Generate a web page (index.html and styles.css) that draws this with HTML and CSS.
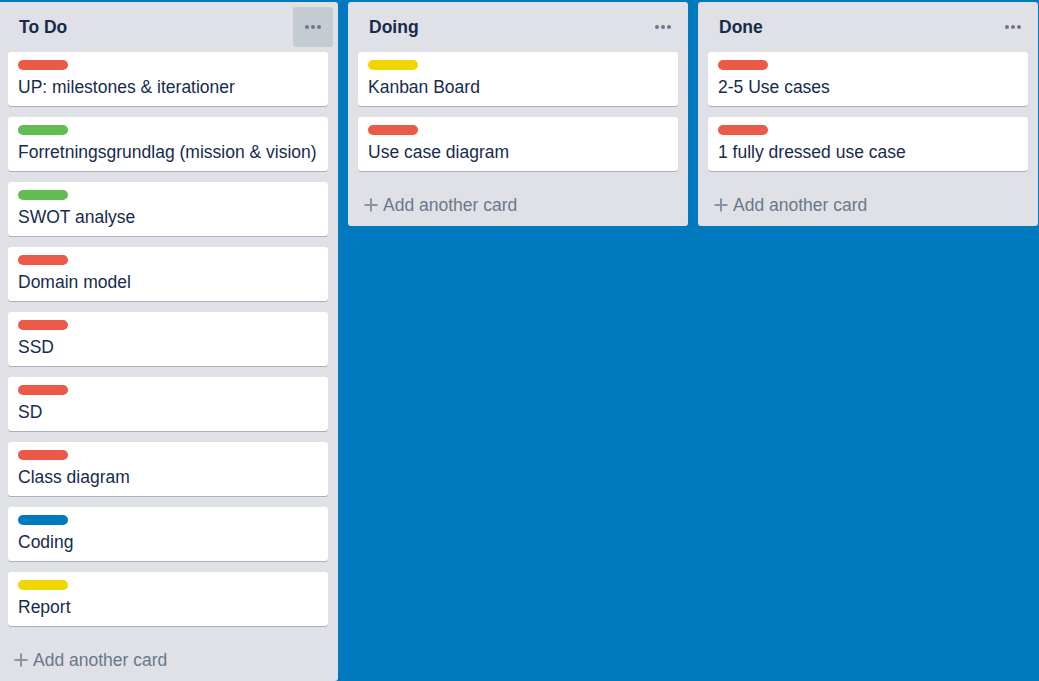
FILE: index.html
```html
<!DOCTYPE html>
<html>
<head>
<meta charset="utf-8">
<link rel="stylesheet" href="styles.css">
</head>
<body>
<div class="board">
  <div class="list">
    <div class="list-header">
      <h2 class="list-title">To Do</h2>
      <button class="menu-btn active" aria-label="List actions"><span></span><span></span><span></span></button>
    </div>
    <div class="cards">
      <div class="card"><div class="label red"></div><div class="card-title">UP: milestones &amp; iterationer</div></div>
      <div class="card"><div class="label green"></div><div class="card-title">Forretningsgrundlag (mission &amp; vision)</div></div>
      <div class="card"><div class="label green"></div><div class="card-title">SWOT analyse</div></div>
      <div class="card"><div class="label red"></div><div class="card-title">Domain model</div></div>
      <div class="card"><div class="label red"></div><div class="card-title">SSD</div></div>
      <div class="card"><div class="label red"></div><div class="card-title">SD</div></div>
      <div class="card"><div class="label red"></div><div class="card-title">Class diagram</div></div>
      <div class="card"><div class="label blue"></div><div class="card-title">Coding</div></div>
      <div class="card"><div class="label yellow"></div><div class="card-title">Report</div></div>
    </div>
    <div class="add-card"><svg class="plus" viewBox="0 0 14 14" width="14" height="14"><path d="M7 0.5v13M0.5 7h13" stroke="currentColor" stroke-width="2"/></svg><span>Add another card</span></div>
  </div>

  <div class="list">
    <div class="list-header">
      <h2 class="list-title">Doing</h2>
      <button class="menu-btn" aria-label="List actions"><span></span><span></span><span></span></button>
    </div>
    <div class="cards">
      <div class="card"><div class="label yellow"></div><div class="card-title">Kanban Board</div></div>
      <div class="card"><div class="label red"></div><div class="card-title">Use case diagram</div></div>
    </div>
    <div class="add-card"><svg class="plus" viewBox="0 0 14 14" width="14" height="14"><path d="M7 0.5v13M0.5 7h13" stroke="currentColor" stroke-width="2"/></svg><span>Add another card</span></div>
  </div>

  <div class="list">
    <div class="list-header">
      <h2 class="list-title">Done</h2>
      <button class="menu-btn" aria-label="List actions"><span></span><span></span><span></span></button>
    </div>
    <div class="cards">
      <div class="card"><div class="label red"></div><div class="card-title">2-5 Use cases</div></div>
      <div class="card"><div class="label red"></div><div class="card-title">1 fully dressed use case</div></div>
    </div>
    <div class="add-card"><svg class="plus" viewBox="0 0 14 14" width="14" height="14"><path d="M7 0.5v13M0.5 7h13" stroke="currentColor" stroke-width="2"/></svg><span>Add another card</span></div>
  </div>
</div>
</body>
</html>
```
FILE: styles.css
```css
html, body {
  margin: 0;
  padding: 0;
}
body {
  background: #0079bf;
  font-family: "Liberation Sans", Arial, sans-serif;
  color: #172b4d;
  overflow: hidden;
  height: 681px;
}
.board {
  display: flex;
  align-items: flex-start;
  gap: 10px;
  padding-top: 2px;
  margin-left: -2px;
}
.list {
  flex: 0 0 340px;
  width: 340px;
  background: #dfe1e6;
  border-radius: 3px;
}
.list-header {
  display: flex;
  align-items: flex-start;
  height: 50px;
  box-sizing: border-box;
  padding: 5px 5px 0 21px;
}
.list-title {
  margin: 0;
  font-size: 17.5px;
  font-weight: bold;
  line-height: 41px;
  color: #172b4d;
}
.menu-btn {
  margin-left: auto;
  width: 40px;
  height: 40px;
  border: 0;
  border-radius: 3px;
  background: transparent;
  display: flex;
  align-items: center;
  justify-content: center;
  gap: 2px;
  padding: 0;
}
.menu-btn.active {
  background: #c4cbd1;
}
.menu-btn span {
  width: 4px;
  height: 4px;
  border-radius: 50%;
  background: #6b778c;
}
.cards {
  padding: 0 10px;
}
.card {
  height: 54px;
  box-sizing: border-box;
  background: #fff;
  border-radius: 3px;
  box-shadow: 0 1px 0 rgba(9, 30, 66, 0.25);
  margin-bottom: 11px;
  padding: 8px 10px 0;
}
.label {
  width: 50px;
  height: 10px;
  border-radius: 5px;
  margin-bottom: 7px;
}
.label.red { background: #eb5a46; }
.label.green { background: #61bd4f; }
.label.blue { background: #0079bf; }
.label.yellow { background: #f2d600; }
.card-title {
  font-size: 17.5px;
  line-height: 20px;
  color: #172b4d;
  white-space: nowrap;
}
.add-card {
  height: 44px;
  box-sizing: border-box;
  padding-top: 2px;
  display: flex;
  align-items: center;
  padding-left: 16px;
  color: #6b778c;
  font-size: 17.5px;
}
.plus {
  color: #8993a4;
  margin-right: 5px;
}
```
